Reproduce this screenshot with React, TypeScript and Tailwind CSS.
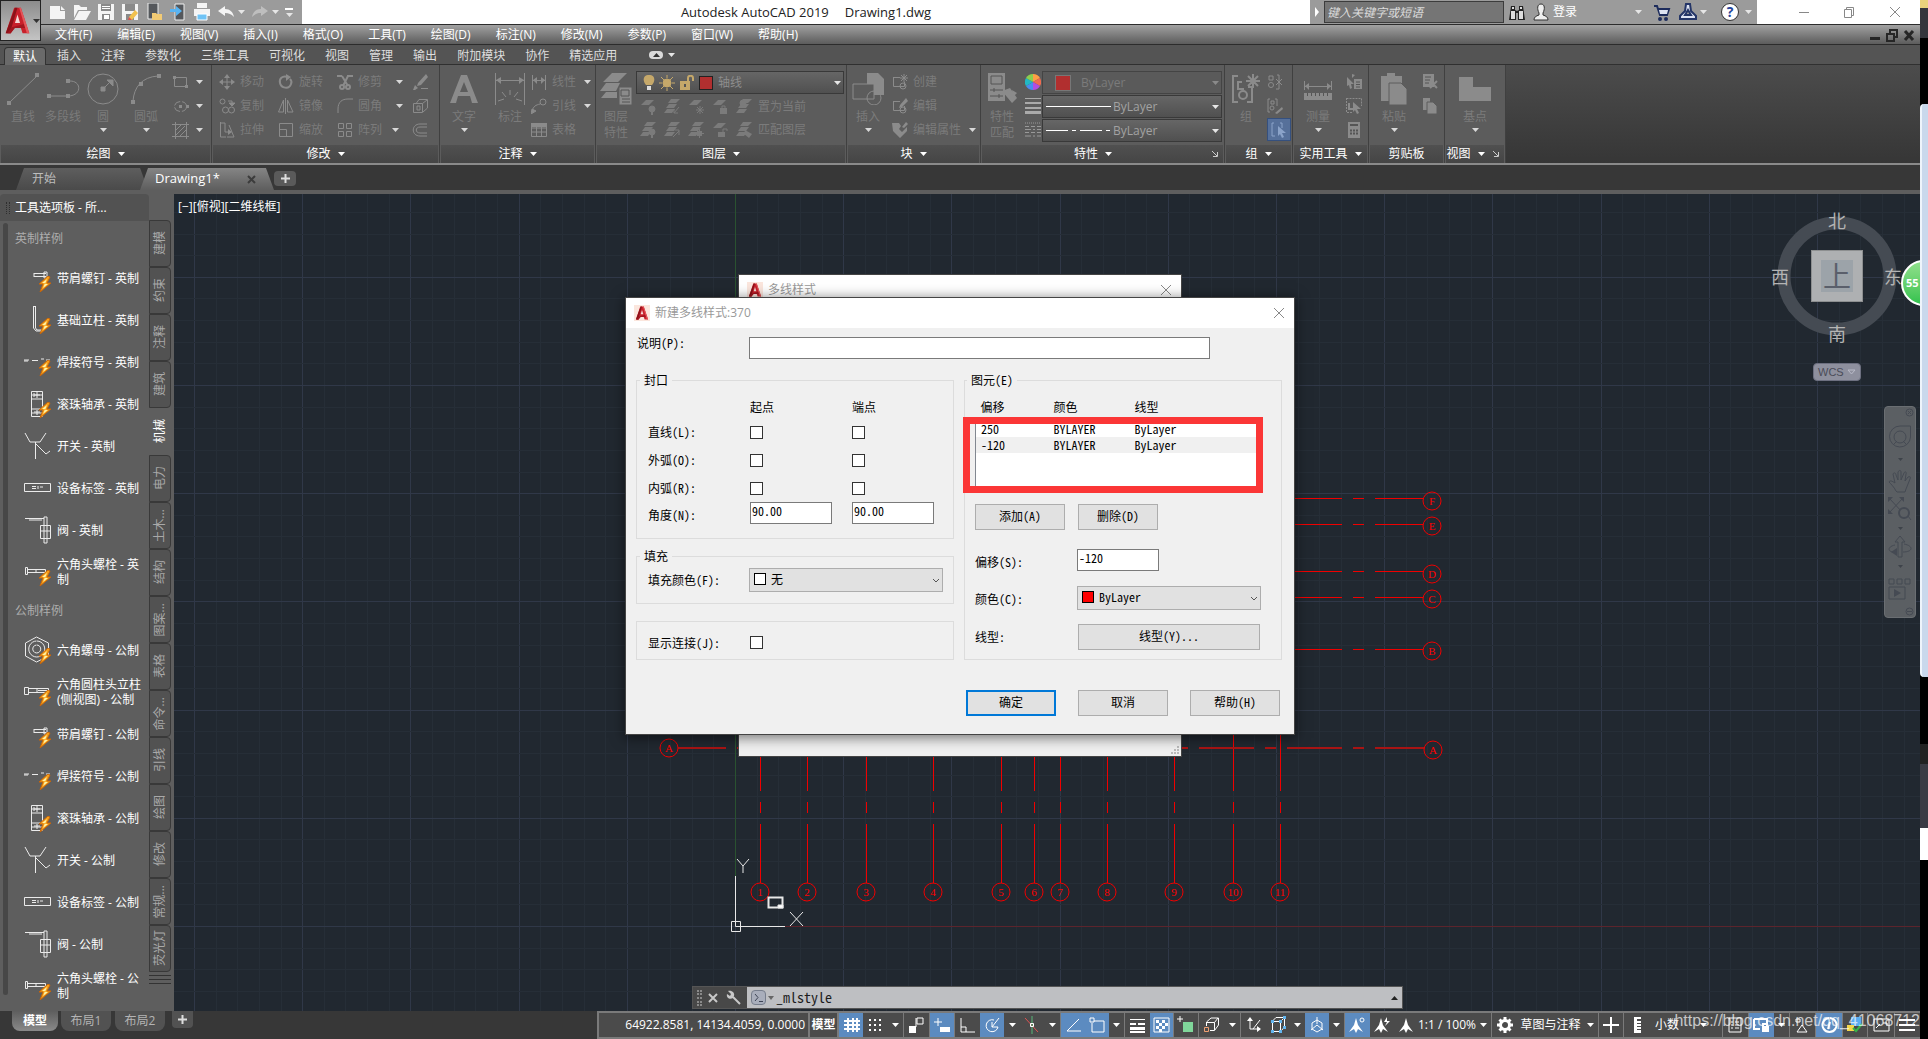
import type { ReactNode } from 'react'

const UI = "font-['Open_Sans','Noto_Sans_CJK_SC',sans-serif]"
const MONO = "font-['Noto_Sans_Mono_CJK_SC','Noto_Sans_CJK_SC',monospace]"

type IcoProps = { w?: number; h?: number; d?: string; f?: string; className?: string; sw?: number; children?: ReactNode }

// d is stroked, f is filled, both in the current text colour
function Ico({ w = 16, h = w, d, f, className = '', sw = 1, children }: IcoProps) {
  return (
    <svg width={w} height={h} viewBox={`0 0 ${w} ${h}`} className={`shrink-0 ${className}`} fill="none" stroke="currentColor" strokeWidth={sw} aria-hidden="true">
      {d && <path d={d} />}
      {f && <path d={f} fill="currentColor" stroke="none" />}
      {children}
    </svg>
  )
}

function Caret({ className = 'text-[#e6e6e6]' }: { className?: string }) {
  return <Ico w={7} h={4} f="M0 0H7L3.5 4Z" className={className} />
}

function ALogo({ size = 16 }: { size?: number }) {
  return (
    <svg width={size} height={size} viewBox="0 0 30 32" className="shrink-0" aria-hidden="true">
      <path d="M11 1H19L29 31H21L19 25H11L7 31H1Z" fill="#c8202b" />
      <path d="M12 1H15L8 24L7 31H1Z" fill="#8c1219" />
      <path d="M15 9L18 19H12Z" fill="#f3d9d6" />
      <path d="M8 24L23 20L24 25H12L7 31H3Z" fill="#a3161f" />
      <path d="M17 1H19L29 31H26Z" fill="#e4565a" />
    </svg>
  )
}

/* ---------- title bar ---------- */

function TitleBar() {
  const btn = 'flex h-6 w-6 items-center justify-center text-[#f4f4f4]'
  return (
    <header className="flex h-6 items-stretch justify-between bg-white">
      <div className="flex w-[302px] items-center bg-[#9b9b9b] pl-[46px]">
        <button aria-label="新建" className={btn}><Ico w={18} f="M1 3H11V8H16V16H1Z M12 3L16 7H12Z" /></button>
        <button aria-label="打开" className={btn}><Ico w={18} f="M1 2H6L8 4H14V7H5L1 15Z M6 8H18L13 17H1Z" /></button>
        <button aria-label="保存" className={btn}><Ico w={18} f="M1 1H17V17H1Z"><path d="M4 1H14V8H4Z M5 11H13V17H5Z" fill="#8a8a8a" stroke="none" /><path d="M7 12H12V16H7Z M5 3H13V4H5Z M5 5H13V6H5Z" fill="#fff" stroke="none" /></Ico></button>
        <button aria-label="另存为" className={btn}><Ico w={18} f="M1 1H17V17H1Z"><path d="M4 1H14V8H4Z M5 11H13V17H5Z" fill="#8a8a8a" stroke="none" /><path d="M8 14L14 7L17 10L11 17H8Z" fill="#f2c14e" stroke="none" /><path d="M8 14L11 17H7Z" fill="#d9534f" stroke="none" /></Ico></button>
        <button aria-label="从移动设备打开" className={btn}><Ico w={18}><path d="M3 0H13V16H3Z" fill="#55585c" stroke="#eee" /><path d="M7 10H11L12 11H17V17H7Z" fill="#f3cb74" stroke="none" /></Ico></button>
        <button aria-label="保存到移动设备" className={btn}><Ico w={18}><path d="M6 1H15V17H6Z" fill="#55585c" stroke="#eee" /><path d="M1 6H7V3L13 8L7 13V9H1Z" fill="#59b4f2" stroke="none" /></Ico></button>
        <button aria-label="打印" className={btn}><Ico w={18} f="M4 0H14V5H4Z M1 6H17V13H1Z"><path d="M4 11H14V17H4Z" fill="#6fc3f5" stroke="#fff" /></Ico></button>
        <button aria-label="放弃" className={btn}><Ico w={18} f="M1 8L8 3V6C13 6 16 9 17 14C14 11 12 10 8 10V13Z" /></button>
        <Caret />
        <button aria-label="重做" className={btn + ' ml-[3px] opacity-40'}><Ico w={18} f="M17 8L10 3V6C5 6 2 9 1 14C4 11 6 10 10 10V13Z" /></button>
        <Caret />
        <button aria-label="自定义快速访问工具栏" className="ml-[6px] flex flex-col items-center gap-[3px] text-white">
          <span className="h-[2px] w-2 bg-white" />
          <Caret />
        </button>
      </div>
      <h1 className="flex items-center gap-4 text-[13px] leading-6 text-[#222]">
        <span>Autodesk AutoCAD 2019</span>
        <span>Drawing1.dwg</span>
      </h1>
      <div className="flex w-[610px] items-stretch">
        <div className="flex w-[447px] items-center bg-[#9b9b9b] text-white">
          <Ico w={14} h={10} f="M5 0V10L9 5Z" />
          <input aria-label="搜索" placeholder="键入关键字或短语" className="h-[22px] w-[180px] border border-[#3c3c3c] bg-[#757575] px-[2px] text-xs italic placeholder:text-[#dcdcdc]" />
          <Ico w={24} h={20} className="ml-[1px] text-[#222]" f="M6 4H10V8L12 9L14 8V4H18L20 18H13V11H11V18H4Z"><path d="M6 9H10V17H6Z M14 9H18V17H14Z M7 5H9V7H7Z M15 5H17V7H15Z" fill="#ddd" stroke="none" /></Ico>
          <button className="flex items-center text-xs"><Ico w={24} h={20}><path d="M12 2C16 2 16 7 14 11L14 13C17 14 19 15 19 18H5C5 15 7 14 10 13V11C8 7 8 2 12 2Z" fill="#eee" stroke="#333" /></Ico>登录</button>
          <span className="ml-[58px]"><Caret /></span>
          <Ico w={20} className="ml-[10px] text-[#1d2c5c]" sw={2} d="M2 4H5L8 13H15L17 7H6"><path d="M7 8H16L15 12H8Z" fill="#dde3f2" stroke="none" /><circle cx="8" cy="17" r="1" /><circle cx="14" cy="17" r="1" /></Ico>
          <Ico w={20} className="ml-[6px]"><path d="M8 2H12L13 9L18 14V17H2V14L7 9Z" fill="#dde3f2" stroke="#243567" strokeWidth="2" /><path d="M10 8L13 13H7Z" fill="#9b9b9b" stroke="#243567" strokeWidth="2" /></Ico>
          <span className="ml-[2px]"><Caret /></span>
          <button aria-label="帮助" className="ml-[14px] flex h-[18px] w-[18px] items-center justify-center rounded-full border border-[#333] bg-white text-sm font-bold text-[#24439a]">?</button>
          <span className="ml-[6px]"><Caret /></span>
        </div>
        <div className="flex flex-1 items-center justify-between pr-[18px] pl-[40px] text-[#888]">
          <button aria-label="最小化"><Ico w={14} d="M2 7.5H12" /></button>
          <button aria-label="还原"><Ico w={14} d="M2.5 4.5H9.5V12.5H2.5Z M4.5 4V2.5H11.5V10.5H10" /></button>
          <button aria-label="关闭"><Ico w={14} d="M2 2L12 12M12 2L2 12" /></button>
        </div>
      </div>
    </header>
  )
}

const MENUS = ['文件(F)', '编辑(E)', '视图(V)', '插入(I)', '格式(O)', '工具(T)', '绘图(D)', '标注(N)', '修改(M)', '参数(P)', '窗口(W)', '帮助(H)']

function MenuBar() {
  return (
    <nav className="flex h-[21px] items-center justify-between border-y border-[#2c2c2c] bg-linear-to-b from-[#a2a2a2] to-[#5c5c5c] pr-1 pl-[55px]">
      <div className="flex gap-[25px] text-xs leading-5 text-white">
        {MENUS.map((m) => <button key={m}>{m}</button>)}
      </div>
      <div className="flex gap-[3px] text-[#262626]">
        <Ico w={14} sw={3} d="M2 10.5H12" />
        <Ico w={14} sw={2} d="M2 6H9V13H2Z M5 5V2H12V9H10" />
        <Ico w={14} sw={3} d="M3 3L11 12M11 3L3 12" />
      </div>
    </nav>
  )
}

const RIBBON_TABS = ['插入', '注释', '参数化', '三维工具', '可视化', '视图', '管理', '输出', '附加模块', '协作', '精选应用']

function RibbonTabs() {
  return (
    <div className="flex h-[20px] items-stretch border-b border-[#303030] bg-[#545454] text-xs text-[#dedede]">
      <button className="ml-1 mt-[2px] -mb-px w-[42px] rounded-t-sm border border-b-0 border-[#333] bg-[#6a6a6a] text-white">默认</button>
      <div className="ml-[11px] flex items-center gap-5 pt-[3px]">
        {RIBBON_TABS.map((t) => <button key={t}>{t}</button>)}
      </div>
      <div className="ml-8 flex items-center gap-[5px]">
        <span className="flex h-2 w-[14px] items-center justify-center rounded-sm bg-[#dadada] text-[#333]"><Ico w={7} h={4} f="M0 4H7L3.5 0Z" /></span>
        <Caret />
      </div>
    </div>
  )
}

/* ---------- ribbon ---------- */

function Panel({ title, width, arrow = true, launcher = false, children }: { title: string; width: string; arrow?: boolean; launcher?: boolean; children: ReactNode }) {
  return (
    <section className={`flex shrink-0 flex-col border-r border-[#404040] bg-[#5c5c5c] ${width}`}>
      <div className="flex h-20 items-start text-[#8b8b8b]">{children}</div>
      <div className="mx-px flex h-[18px] items-center justify-center gap-[7px] bg-linear-to-b from-[#505050] to-[#454545] text-xs text-white">
        <span className={launcher ? 'ml-auto' : ''}>{title}</span>
        {arrow && <Caret className="text-white" />}
        {launcher && <Ico w={8} className="mr-1 ml-auto text-[#ccc]" d="M1 1L6 6M6.5 2V6.5H2" />}
      </div>
    </section>
  )
}

function Big({ label, line2, arrow, width = 'w-10', children }: { label: string; line2?: string; arrow?: boolean; width?: string; children: ReactNode }) {
  return (
    <button className={`flex flex-col items-center pt-2 text-xs leading-4 text-[#7b7b7b] ${width}`}>
      <span className="mb-1 flex h-8 items-center text-[#8b8b8b]">{children}</span>
      <span className="whitespace-nowrap">{label}</span>
      {line2 && <span>{line2}</span>}
      {arrow && <span className="flex h-[10px] items-center"><Caret className="text-[#d8d8d8]" /></span>}
    </button>
  )
}

function Small({ label, arrow, gap = 'gap-[14px]', children }: { label?: string; arrow?: boolean; gap?: string; children: ReactNode }) {
  return (
    <button className={`flex h-6 items-center text-xs text-[#7b7b7b] ${gap}`}>
      <span className="flex items-center gap-[5px] whitespace-nowrap"><span className="text-[#8b8b8b]">{children}</span>{label}</span>
      {arrow && <Caret className="text-[#d8d8d8]" />}
    </button>
  )
}

function Col({ className = '', children }: { className?: string; children: ReactNode }) {
  return <div className={`flex flex-col items-start pt-[5px] ${className}`}>{children}</div>
}

const LAYER_A = 'M6 1H14L9 6H1Z'
const STACK = 'M7 0H16L12 4H4Z M5 5H13L10 9H2Z M3 10H11L8 14H0Z'

function Ribbon() {
  return (
    <div className="flex h-[100px] items-stretch border-b-2 border-[#8a8a8a] bg-linear-to-b from-[#4c4c4c] to-[#363636]">
      <Panel title="绘图" width="w-[212px]">
        <div className="w-[3px]" />
        <Big label="直线"><Ico w={34} h={32} d="M4 29L31 3" f="M1 28h4v4h-4z M29 0h4v4h-4z" /></Big>
        <Big label="多段线"><Ico w={34} h={32} d="M3 23H22C36 23 36 8 24 8" f="M1 21h4v4h-4z M20 21h4v4h-4z M20 6h4v4h-4z" /></Big>
        <Big label="圆" arrow><Ico w={32} d="M17 15L24 8"><circle cx="16" cy="16" r="15" /><path d="M14 14h4v4h-4z M20 7H26V13Z" fill="currentColor" /></Ico></Big>
        <Big label="圆弧" arrow width="w-[46px]"><Ico w={32} d="M3 28C4 14 12 4 28 3" f="M1 27h4v4h-4z M9 9h4v4h-4z M27 1h4v4h-4z" /></Big>
        <Col className="pl-[3px]">
          <Small arrow gap="gap-[7px]"><Ico w={17} d="M2.5 3.5H14.5V12.5H2.5Z" f="M1 2h3v3h-3z M13 11h3v3h-3z" /></Small>
          <Small arrow gap="gap-[7px]"><Ico w={17}><ellipse cx="8.5" cy="8.5" rx="6" ry="5" strokeDasharray="7 2" /><path d="M7 7h3v3h-3z M14 7h3v3h-3z" fill="currentColor" stroke="none" /></Ico></Small>
          <Small arrow gap="gap-[7px]"><Ico w={17} d="M3.5 0V17 M14.5 0V17 M0 2.5H17 M0 14.5H17 M4 8L9 3 M4 13L13 4 M8 14L14 8" /></Small>
        </Col>
      </Panel>

      <Panel title="修改" width="w-[228px]">
        <Col className="w-[59px] pl-[7px]">
          <Small label="移动"><Ico d="M8 2V14M2 8H14" f="M8 0L11 4H5Z M8 16L11 12H5Z M0 8L4 5V11Z M16 8L12 5V11Z" /></Small>
          <Small label="复制"><Ico d="M9 3H13V6"><circle cx="3.5" cy="3.5" r="2.5" /><circle cx="6.5" cy="12" r="3" /><circle cx="12.5" cy="12" r="3" /><path d="M10 5H16L13 8Z" fill="currentColor" /></Ico></Small>
          <Small label="拉伸"><Ico d="M1.5 0V15H7M1.5 1H6V10H12M10 3L15 15H8" f="M9 7L13 10L9 13Z" /></Small>
        </Col>
        <Col className="w-[59px] pl-[7px]">
          <Small label="旋转"><Ico sw={2} d="M10 3C4 1 1 5 2 9C3 14 11 16 13 10C14 8 13 6 12 5" f="M8 0L13 3L8 7Z" /></Small>
          <Small label="镜像"><Ico d="M7.5 0V16M5.5 2V14H0.5ZM9.5 2V14H15Z" /></Small>
          <Small label="缩放"><Ico d="M1.5 1.5H14.5V14.5H1.5ZM1.5 7.5H8.5V14" /></Small>
        </Col>
        <Col className="w-[76px] pl-[7px]">
          <Small label="修剪" arrow><Ico sw={2} d="M0 2H5M10 2H16M5 2L11 12M11 2L6 12"><circle cx="5" cy="13" r="2" /><circle cx="11" cy="13" r="2" /></Ico></Small>
          <Small label="圆角" arrow><Ico d="M1 15V11C1 4 5 1 11 1H16" /></Small>
          <Small label="阵列" arrow gap="gap-[10px]"><Ico d="M1.5 1.5H6.5V6.5H1.5ZM9.5 1.5H14.5V6.5H9.5ZM1.5 9.5H6.5V14.5H1.5ZM9.5 9.5H14.5V14.5H9.5Z" /></Small>
        </Col>
        <Col className="pl-[6px]">
          <Small><Ico f="M14 0L16 3L9 11L5 12L6 9Z M3 11L6 14L3 16H1Z M9 14H16V15H9Z" /></Small>
          <Small><Ico d="M1.5 5.5H10.5V14.5H1.5ZM4.5 5L7 1.5H15.5V10L11 14M10.5 5.5L15 2M5 8H8V12H5Z" /></Small>
          <Small><Ico d="M15 2H8C-1 2 -1 14 8 14H15M15 5H8C3 5 3 11 8 11H15" /></Small>
        </Col>
      </Panel>

      <Panel title="注释" width="w-[156px]">
        <Big label="文字" arrow width="w-[48px]"><Ico w={28} h={30} f="M11 1H17L28 29H22L20 22H8L6 29H0Z"><path d="M14 8L18 18H10Z" fill="#5c5c5c" stroke="none" /></Ico></Big>
        <Big label="标注" width="w-[36px] ml-[4px]"><Ico w={32} d="M1.5 0V32M30.5 0V32M2 7.5H30M16 17V22M8 19L12 24M24 19L20 24M4 28L10 26M28 28L22 26" f="M2 7L7 4V11Z M30 7L25 4V11Z" /></Big>
        <Col className="pl-[3px]">
          <Small label="线性" arrow gap="gap-2"><Ico d="M1.5 1V16M14.5 1V16M2 6.5H14" f="M2 6L6 3V10Z M14 6L10 3V10Z" /></Small>
          <Small label="引线" arrow gap="gap-2"><Ico d="M1 14C2 8 5 7 9 6"><circle cx="12" cy="4" r="3" /><path d="M0 16L1 11L5 13Z" fill="currentColor" /></Ico></Small>
          <Small label="表格"><Ico d="M0.5 1.5H15.5V14.5H0.5ZM0 6H16M0 10H16M5.5 5V15M10.5 5V15" f="M0 1H16V5H0Z" /></Small>
        </Col>
      </Panel>

      <Panel title="图层" width="w-[251px]">
        <Big label="图层" line2="特性"><Ico w={32} f="M12 0H27L18 9H3Z M6 10H20L16 18H0Z M6 19H17V25H1Z"><path d="M19 14H32V32H19Z" fill="#8b8b8b" stroke="#5c5c5c" /><path d="M21 17H29V23H21ZM22 26H30M22 29H30" stroke="#555" /></Ico></Big>
        <div className="pt-[6px]">
          <button className="flex h-[23px] w-[208px] items-center border border-[#393939] bg-linear-to-b from-[#666] to-[#505050] pr-[2px] pl-[6px] text-xs text-[#8d8d8d]">
            <Ico w={12} h={16} className="text-[#c5a86a]" f="M6 0C13 0 12 7 9 10H3C0 7 -1 0 6 0Z"><path d="M4 11H8V15H4Z" fill="#ddd" stroke="none" /></Ico>
            <Ico w={16} className="ml-[4px] text-[#c5a86a]" d="M8 0V3M8 13V16M0 8H3M13 8H16M2 2L5 5M14 2L11 5M2 14L5 11M14 14L11 11"><circle cx="8" cy="8" r="4" fill="currentColor" /></Ico>
            <Ico w={16} className="ml-[4px] text-[#c5a86a]" sw={2} f="M1 6H11V15H1Z" d="M9 6V3C9 0 14 0 14 3V6"><path d="M5 9H7V12H5Z" fill="#555" stroke="none" /></Ico>
            <span className="ml-[4px] h-[14px] w-[14px] border border-[#222] bg-[#b12f2f]" />
            <span className="ml-[5px]">轴线</span>
            <span className="ml-auto"><Caret /></span>
          </button>
          <div className="flex h-6 items-center gap-2 pt-[1px] pl-[4px] text-xs text-[#7b7b7b]">
            <Ico f={LAYER_A}><circle cx="12" cy="10" r="3" fill="currentColor" /><path d="M12 12V16" strokeWidth="2" /></Ico>
            <Ico f={STACK} d="M15 8L10 14M10 10V14H14" />
            <Ico f={LAYER_A} d="M12 7V15M8 11H16M9 8L15 14M15 8L9 14" />
            <Ico f={LAYER_A + ' M8 9H15V15H8Z'} d="M10 9V7H13V9" />
            <Ico f={STACK}><circle cx="7" cy="4" r="3" fill="currentColor" /></Ico>
            <span className="-ml-[2px]">置为当前</span>
          </div>
          <div className="flex h-6 items-center gap-2 pl-[4px] text-xs text-[#7b7b7b]">
            <Ico f={STACK}><circle cx="12" cy="10" r="3" fill="currentColor" /><path d="M12 12V16" strokeWidth="2" /></Ico>
            <Ico f={STACK} d="M9 15L15 9M11 8H15V13" />
            <Ico f={STACK + ' M9 9h5v5h-5z'} d="M11.5 7V16M7 11.5H16" />
            <Ico f={LAYER_A + ' M6 10H13V15H6Z'} d="M11 10V7H15V9" />
            <Ico f={STACK + ' M9 8L16 12L13 16L8 12Z'} />
            <span className="-ml-[2px]">匹配图层</span>
          </div>
        </div>
      </Panel>

      <Panel title="块" width="w-[134px]">
        <Big label="插入" arrow width="w-[42px]"><Ico w={32} f="M15 0H26L32 6V22H15Z"><path d="M1 11H22V26H1Z" fill="#5c5c5c" /><circle cx="22" cy="25" r="7" /></Ico></Big>
        <Col className="pl-[3px]">
          <Small label="创建"><Ico d="M1.5 3.5H8M1.5 3V12.5H12.5V8"><circle cx="11" cy="12" r="3" /><path d="M12 0V8M8 4H16M9 1L15 7M15 1L9 7" /></Ico></Small>
          <Small label="编辑"><Ico d="M1.5 3.5H8M1.5 3V12.5H12.5V8" f="M14 0L16 3L10 9L7 10L8 7Z"><circle cx="11" cy="12" r="3" /></Ico></Small>
          <Small label="编辑属性" arrow gap="gap-2"><Ico f="M0 1H7L9 4L7 7L10 10L15 5V9L8 16L1 9Z M14 0L16 2L12 6L10 5Z" /></Small>
        </Col>
      </Panel>

      <Panel title="特性" width="w-[244px]" launcher>
        <Big label="特性" line2="匹配" width="w-[42px]"><Ico w={32} f="M2 0H19V28H2Z M16 18L24 15L31 25L26 30Z M26 17L31 20L28 23Z"><path d="M5 3H16V11H5ZM4 17H17M4 23H17M8 15V19M13 21V25" stroke="#555" /></Ico></Big>
        <div className="flex w-[19px] flex-col items-center pt-[5px]">
          <svg width="16" height="24" viewBox="0 0 16 24" aria-hidden="true">
            <path d="M8 12V4A8 8 0 0 1 15 8Z" fill="#ff9f45" />
            <path d="M8 12L15 8A8 8 0 0 1 15 16Z" fill="#f26b4f" />
            <path d="M8 12L15 16A8 8 0 0 1 8 20Z" fill="#b24de0" />
            <path d="M8 12V20A8 8 0 0 1 1 16Z" fill="#4a8cf0" />
            <path d="M8 12L1 16A8 8 0 0 1 1 8Z" fill="#22b8c4" />
            <path d="M8 12L1 8A8 8 0 0 1 8 4Z" fill="#8bcf4f" />
          </svg>
          <span className="flex h-6 items-center"><Ico f="M0 0H16V1H0Z M0 4H16V6H0Z M0 9H16V11H0Z M0 13H16V16H0Z" className="text-[#aaa]" /></span>
          <span className="flex h-6 items-center"><Ico className="text-[#999]"><path d="M0 1H16" strokeDasharray="1 1" /><path d="M0 4.5H16M0 10.5H16" strokeDasharray="4 2" /><path d="M0 7.5H16M0 14H16" strokeDasharray="6 2 2 2" /></Ico></span>
        </div>
        <div className="flex w-[180px] flex-col gap-px pt-[6px] text-xs text-[#a2a2a2]">
          <button className="flex h-[23px] items-center border border-[#444] bg-[#5a5a5a] pr-[2px] pl-3 text-[#7b7b7b]">
            <span className="h-4 w-4 border border-[#777] bg-[#b12f2f]" /><span className="ml-[10px]">ByLayer</span>
            <span className="ml-auto"><Caret className="text-[#8a8a8a]" /></span>
          </button>
          <button className="flex h-[23px] items-center border border-[#393939] bg-linear-to-b from-[#666] to-[#505050] pr-[2px] pl-[3px]">
            <span className="mr-[2px] h-px w-[65px] bg-white" />ByLayer
            <span className="ml-auto"><Caret /></span>
          </button>
          <button className="flex h-[23px] items-center border border-[#393939] bg-linear-to-b from-[#666] to-[#505050] pr-[2px] pl-[3px]">
            <Ico w={65} h={3} className="mr-[2px] text-white"><path d="M0 1.5H65" strokeDasharray="22 4 4 4" /></Ico>ByLayer
            <span className="ml-auto"><Caret /></span>
          </button>
        </div>
      </Panel>

      <Panel title="组" width="w-[68px]">
        <Big label="组" width="w-[42px]"><Ico w={32} sw={2} d="M8 3H3V29H8M18 14H22V29H17M7 9H12M8 8V16H14M23 1V15M16 8H30M18 3L28 13M28 3L18 13"><circle cx="13" cy="22" r="4" /></Ico></Big>
        <Col className="items-center">
          <Small><Ico d="M2 2H6V6H2ZM10 1H12V15H9M9 5L15 11M15 5L9 11"><circle cx="4" cy="11" r="2.5" /></Ico></Small>
          <Small><Ico d="M3 1H1V14H3M8 1H10V8M4 3H7V6H4Z" f="M15 9L16 11L10 16L8 15Z"><circle cx="5" cy="10" r="2" /></Ico></Small>
          <button aria-label="组选择" className="flex h-[23px] w-6 items-center justify-center border border-[#35507e] bg-[#56709a]"><Ico className="text-[#8ba3c9]" d="M3 1H1V14H4M9 1H11V6" f="M7 4L15 11H11L13 15L11 16L9 12L7 14Z" /></button>
        </Col>
      </Panel>

      <Panel title="实用工具" width="w-[76px]">
        <Big label="测量" arrow width="w-[50px]"><Ico w={28} h={28} d="M0.5 6V15M27.5 6V15M1 11.5H27" f="M0 18H28V25H0Z M1 11L5 8V15Z M27 11L23 8V15Z"><path d="M3.5 18V21M7.5 18V21M11.5 18V21M15.5 18V21M19.5 18V21M23.5 18V21" stroke="#555" /></Ico></Big>
        <Col className="pl-[3px]">
          <Small><Ico f="M1 3L8 10H5L6 14L4 15L3 11L1 12Z M8 5H16V15H8Z M6 0L9 1L6 4Z"><path d="M10 8H14M10 10.5H14M10 13H14" stroke="#555" /></Ico></Small>
          <Small><Ico f="M7 4L15 11H11L13 15L11 16L9 12L7 14Z"><path d="M0.5 0.5H15.5V8M0.5 0V14.5H7" strokeDasharray="2 1" /><path d="M3 5V11H7" strokeWidth="2" /></Ico></Small>
          <Small><Ico f="M2 0H14V16H2Z"><path d="M4 3H12M4 8.5H6M7 8.5H9M10 8.5H12M4 11.5H6M7 11.5H9M10 11.5H12" strokeWidth="2" stroke="#555" /></Ico></Small>
        </Col>
      </Panel>

      <Panel title="剪贴板" width="w-[76px]" arrow={false}>
        <Big label="粘贴" arrow width="w-[50px]"><Ico w={28} h={32} f="M1 3H7V0H15V3H22V28H1Z"><path d="M9 10H21L27 16V32H9Z" fill="#8b8b8b" stroke="#5c5c5c" /></Ico></Big>
        <Col className="pl-[3px]">
          <Small><Ico f="M1 0H12V13H1Z"><path d="M3 3H9M3 6H8M3 9H7" stroke="#555" /><path d="M8 7L15 14M15 7L8 14" strokeWidth="2" /></Ico></Small>
          <Small><Ico f="M1 0H8V12H1Z"><path d="M5 4H11L15 8V16H5Z" fill="#8b8b8b" stroke="#5c5c5c" /></Ico></Small>
        </Col>
      </Panel>

      <Panel title="视图" width="w-[61px]" launcher>
        <Big label="基点" arrow width="w-[60px]"><Ico w={32} h={28} f="M0 2H14V12H32V26H0Z" /></Big>
      </Panel>
    </div>
  )
}

function FileTabs() {
  return (
    <div className="flex h-[29px] items-end border-b-4 border-[#5e5e5e] bg-[#373737] pl-4 text-xs">
      <button className="h-[22px] w-[132px] rounded-t-lg bg-linear-to-b from-[#5e5e5e] to-[#4a4a4a] pl-4 text-left text-[#bdbdbd] [clip-path:polygon(8px_0,94%_0,100%_100%,0_100%)]">开始</button>
      <div className="-ml-2 flex h-[22px] w-[134px] items-center justify-between bg-linear-to-b from-[#858585] to-[#5e5e5e] pr-[18px] pl-[15px] text-[13px] text-white [clip-path:polygon(8px_0,94%_0,100%_100%,0_100%)]">
        <button>Drawing1*</button>
        <button aria-label="关闭 Drawing1"><Ico w={9} sw={2} className="text-[#3c3c3c]" d="M1 1L8 8M8 1L1 8" /></button>
      </div>
      <button aria-label="新图形" className="mb-1 flex h-[15px] w-[22px] items-center justify-center rounded-sm bg-[#5a5a5a] text-[#ddd]"><Ico w={9} sw={2} d="M4.5 0V9M0 4.5H9" /></button>
    </div>
  )
}

/* ---------- tool palette ---------- */

type Shape = 'screw' | 'stud' | 'weld' | 'bearing' | 'switch' | 'tag' | 'valve' | 'bolt' | 'nut' | 'cap'

const SHAPES: Record<Shape, string> = {
  screw: 'M10 9.5H22M10 12.5H22M10 9V13M20 8H23V14H20Z',
  stud: 'M9 0.5H12M9.5 1V22L12 25H18M11.5 1V22L13 24H18',
  weld: 'M0 12H5M8 12.5H14M17 11H20M22 12H26M0 13H4',
  bearing: 'M7.5 1.5H18.5V26.5H7.5ZM7 5H19M7 9H19M7 19H19M7 23H19M10 3V7M13 2V8M16 5H10M13 20V25M10 22H16',
  switch: 'M1 1L6 10H16L22 1M11.5 10V27M12 12L22 22L26 19',
  tag: 'M0.5 9.5H26.5V17.5H0.5ZM8 12.5H12M8 14.5H12M14 12V15M16 13H19',
  valve: 'M1 2.5H20M5 4H18M20 1H23V27H20ZM16.5 9.5H26.5V22.5H16.5ZM16 15H26',
  bolt: 'M1.5 9.5H3.5V16.5H1.5ZM4 11.5H21.5V14.5H4M12 11V15',
  nut: 'M12.5 1L24.5 7V20L12.5 26L1.5 20V7ZM12.5 5A8 8 0 1 0 13 5M12.5 9A4 4 0 1 0 13 9',
  cap: 'M0.5 9.5H4.5V16.5H0.5ZM4 10.5H24.5V14.5H4M14 12.5H24M13 11V15',
}

function Bolt() {
  return (
    <svg width="14" height="16" viewBox="0 0 14 16" className="absolute top-[12px] left-[14px]" aria-hidden="true">
      <path d="M10 0L1 8H5L2 16L13 7H9L12 1Z" fill="#f7a21b" stroke="#c9660a" />
      <path d="M9 3L4 7H7L5 12L10 8H7Z" fill="#fff3a8" />
    </svg>
  )
}

type Item = [Shape, string, boolean]

const IMPERIAL: Item[] = [
  ['screw', '带肩螺钉 - 英制', true],
  ['stud', '基础立柱 - 英制', true],
  ['weld', '焊接符号 - 英制', true],
  ['bearing', '滚珠轴承 - 英制', true],
  ['switch', '开关 - 英制', false],
  ['tag', '设备标签 - 英制', false],
  ['valve', '阀 - 英制', false],
  ['bolt', '六角头螺栓 - 英制', true],
]

const METRIC: Item[] = [
  ['nut', '六角螺母 - 公制', true],
  ['cap', '六角圆柱头立柱 (侧视图) - 公制', true],
  ['screw', '带肩螺钉 - 公制', true],
  ['weld', '焊接符号 - 公制', true],
  ['bearing', '滚珠轴承 - 公制', true],
  ['switch', '开关 - 公制', false],
  ['tag', '设备标签 - 公制', false],
  ['valve', '阀 - 公制', false],
  ['bolt', '六角头螺栓 - 公制', true],
]

function PaletteGroup({ title, items }: { title: string; items: Item[] }) {
  return (
    <>
      <h2 className="flex h-9 items-center pl-[7px] text-xs text-[#adadad]">{title}</h2>
      <ul>
        {items.map(([shape, label, dynamic]) => (
          <li key={label}>
            <button className="flex h-[42px] w-full items-center pl-4 text-left text-xs leading-[15px] text-white">
              <span className="relative mr-[5px] block text-[#ebebeb]">
                <Ico w={28} d={SHAPES[shape]} />
                {dynamic && <Bolt />}
              </span>
              <span className="w-[88px]">{label}</span>
            </button>
          </li>
        ))}
      </ul>
    </>
  )
}

const PALETTE_TABS = ['建模', '约束', '注释', '建筑', '机械', '电力', '土木...', '结构', '图案...', '表格', '命令...', '引线', '绘图', '修改', '常规...', '荧光灯']

function Palette() {
  return (
    <aside className="flex w-[174px] shrink-0 overflow-hidden bg-[#5e5e5e]">
      <div className="w-[149px]">
        <div className="flex h-[27px] items-center gap-[5px] rounded-t bg-[#525252] pl-[6px] text-xs text-white">
          <span className="h-3 w-1 border-x border-dotted border-[#2e2e2e]" />
          工具选项板 - 所...
        </div>
        <div className="flex pl-[3px]">
          <div className="mt-[2px] mb-3 w-[5px] rounded bg-[#474747]" />
          <div className="flex-1">
            <PaletteGroup title="英制样例" items={IMPERIAL} />
            <PaletteGroup title="公制样例" items={METRIC} />
          </div>
        </div>
      </div>
      <div className="w-[22px] pt-[26px]">
        {PALETTE_TABS.map((t) => (
          <button
            key={t}
            className={`flex h-[47px] w-[22px] items-center justify-center rounded-r-sm border text-xs ${t === '机械' ? 'border-transparent text-white' : 'border-[#393939] bg-[#525252] text-[#a9a9a9]'}`}
          >
            <span className="rotate-180 [text-orientation:sideways] [writing-mode:vertical-rl]">{t}</span>
          </button>
        ))}
        <div className="h-1 border-b border-[#333]" />
        <div className="h-1 border-b border-[#333]" />
        <div className="h-1 border-b border-[#333]" />
      </div>
    </aside>
  )
}

/* ---------- drawing area ---------- */

const STEP = 21.64
const ORIGIN = { x: 561, y: 732 }
const COLUMNS = [586, 633, 692, 759, 827, 860, 886, 933, 1000, 1059, 1106]
const ROWS: [string, number, number][] = [
  ['F', 304, 307],
  ['E', 330, 332],
  ['D', 377, 380],
  ['C', 403, 405],
  ['B', 455, 457],
]

function Bubble({ x, y, label }: { x: number; y: number; label: string }) {
  return (
    <g>
      <circle cx={x} cy={y} r="9" fill="none" stroke="#f00000" />
      <text x={x} y={y + 4} textAnchor="middle" fill="#ff0000" fontSize="11" fontFamily="Liberation Serif, serif">{label}</text>
    </g>
  )
}

function Drawing() {
  const xs = Array.from({ length: 86 }, (_, i) => i - 26)
  const ys = Array.from({ length: 40 }, (_, i) => i - 33)
  const gridColor = (i: number) => (i % 5 === 0 ? '#303848' : '#262e37')
  // major lines last, so they stay on top
  const order = (a: number, b: number) => Number(a % 5 === 0) - Number(b % 5 === 0)
  return (
    <svg className="absolute inset-0 h-full w-full" aria-label="Drawing1">
      <g shapeRendering="crispEdges">
        {xs.sort(order).map((i) => {
          const x = Math.round(ORIGIN.x + i * STEP) + 0.5
          return <line key={i} x1={x} x2={x} y1="0" y2="100%" stroke={gridColor(i)} />
        })}
        {ys.sort(order).map((j) => {
          const y = Math.round(ORIGIN.y + j * STEP) + 0.5
          return <line key={j} x1="0" x2="100%" y1={y} y2={y} stroke={gridColor(j)} />
        })}
        <line x1="561.5" x2="561.5" y1="0" y2="682" stroke="#2a5230" />
        <line x1="611" x2="100%" y1="732.5" y2="732.5" stroke="#5c242c" />
        {COLUMNS.map((x, i) => (
          <path key={x} d={`M${x + 0.5} ${i > 8 ? 540 : 555}V597M${x + 0.5} 608V619M${x + 0.5} 630V689`} stroke="#f00000" />
        ))}
        {ROWS.map(([l, y]) => (
          <path key={l} d={`M1110 ${y + 0.5}H1168M1179 ${y + 0.5}H1190M1201 ${y + 0.5}H1249`} stroke="#f00000" />
        ))}
        <path d="M504 554H552M563 554H574M1007 554H1014M1025 554H1080M1091 554H1102M1113 554H1168M1179 554H1190M1201 554H1250" stroke="#a81414" strokeWidth="2" />
      </g>
      {COLUMNS.map((x, i) => <Bubble key={x} x={x} y={698} label={String(i + 1)} />)}
      {ROWS.map(([l, , y]) => <Bubble key={l} x={1258} y={y} label={l} />)}
      <Bubble x={495} y={554} label="A" />
      <Bubble x={1259} y={556} label="A" />
      <g fill="none" stroke="#e8e8e8">
        <path d="M561.5 682V732.5H611" />
        <path d="M557.5 727.5H566.5V737.5H557.5Z" />
        <path d="M563 665L569 672L575 665M569 672V679" />
        <path d="M616 718L629 732M629 718L616 732" />
        <path d="M594.5 703.5H608.5V713.5H594.5Z" strokeWidth="2" />
        <path d="M604 711H609V714H604Z" fill="#fff" />
      </g>
    </svg>
  )
}

function ViewCube() {
  const dir = "absolute text-[18px] leading-5 text-[#b4b4b4] font-['Noto_Sans_CJK_SC',sans-serif]"
  return (
    <div className="absolute top-[14px] right-[15px] h-[176px] w-[134px]">
      <svg width="134" height="136" viewBox="0 0 134 136" className="absolute top-0 left-0" aria-hidden="true">
        <circle cx="66" cy="68" r="53" fill="none" stroke="#454b53" strokeWidth="13" />
      </svg>
      <button className={dir + ' top-[2px] left-[57px]'}>北</button>
      <button className={dir + ' top-[58px] left-0'}>西</button>
      <button className={dir + ' top-[58px] left-[113px]'}>东</button>
      <button className={dir + ' top-[115px] left-[57px]'}>南</button>
      <button className="absolute top-[42px] left-[40px] flex h-[52px] w-[52px] items-center justify-center border border-[#8d8f90] bg-[#aeb0b2]">
        <span className="flex h-8 w-8 items-center justify-center bg-[#9ca3a9] text-[28px] leading-8 text-[#5a5f6b]">上</span>
      </button>
      <button className="absolute top-[155px] left-[42px] flex h-[18px] w-[48px] items-center justify-between rounded border border-[#6d7080] bg-[#8e909e] px-1 font-['Liberation_Sans',sans-serif] text-[11px] text-[#4a4c58]">
        WCS <Ico w={9} h={6} className="text-[#b9bbc8]" d="M1 1H8L4.5 5Z" />
      </button>
    </div>
  )
}

function NavBar() {
  return (
    <div className="absolute top-[212px] right-1 flex h-[212px] w-8 flex-col items-center rounded border border-[#6a6e72] bg-[#5b5f63] text-[#454a53]">
      <button aria-label="关闭" className="mt-px mr-px self-end"><Ico w={9} d="M3 3L6 6M6 3L3 6"><circle cx="4.5" cy="4.5" r="3.5" /></Ico></button>
      <button aria-label="全导航控制盘" className="mt-[8px]"><Ico w={24} d="M12 1H22.5V12A10.5 10.5 0 1 1 12 1M6 19L9 16M18 19L15 16"><circle cx="12" cy="12" r="6" /></Ico></button>
      <span className="mt-[2px] flex h-4 items-center"><Ico w={5} h={3} className="text-[#3e434a]" f="M0 0H5L2.5 3Z" /></span>
      <button aria-label="平移" className="mt-[2px]"><Ico w={24} d="M8 22C6 18 3 15 1 13C2 11 4 12 7 14L5 5C6 3 8 4 8 6L10 11V3C11 1 13 1 13 3V11L16 4C17 2 19 3 18 5L17 12L20 8C22 7 23 8 22 10L18 20L17 23H9Z" /></button>
      <button aria-label="范围缩放" className="mt-[4px]"><Ico w={24} d="M1 1L15 16M15 1L1 16M20 19L23 23" f="M0 0H5L0 5Z M16 0V5L11 0Z M0 17V12L5 17Z"><circle cx="16" cy="16" r="5" fill="#5b5f63" strokeWidth="2" /></Ico></button>
      <span className="flex h-[14px] items-center"><Ico w={5} h={3} className="text-[#3e434a]" f="M0 0H5L2.5 3Z" /></span>
      <button aria-label="动态观察"><Ico w={24} d="M10 7V22H14V7H17L12 1L7 7ZM7 10C-2 12 0 18 8 17M16 9C26 11 25 17 15 17" f="M3 17L9 13V21Z" /></button>
      <span className="flex h-[14px] items-center"><Ico w={5} h={3} className="text-[#3e434a]" f="M0 0H5L2.5 3Z" /></span>
      <button aria-label="ShowMotion" className="mt-[4px]"><Ico w={24} d="M1 2H6V7H1ZM9 2H14V7H9ZM17 2H22V7H17ZM1 10H17V22H1Z" f="M6 12L13 16L6 20Z" /></button>
      <button aria-label="自定义" className="mt-auto mr-px mb-px self-end"><Ico w={9} d="M2 4.5H7"><circle cx="4.5" cy="4.5" r="3.5" /></Ico></button>
    </div>
  )
}

function CommandLine() {
  return (
    <div className="absolute bottom-[2px] left-[518px] flex h-[23px] w-[711px] items-stretch border border-[#555] bg-[#bebfc2]">
      <div className="flex w-[54px] items-center gap-[6px] bg-[#484848] pl-1 text-[#c8c8c8]">
        <span className="h-4 w-[5px] border-x-2 border-dotted border-[#8a8a8a]" />
        <Ico w={10} sw={2} d="M1 1L9 9M9 1L1 9" />
        <Ico w={16} className="ml-[2px]" sw={2} d="M7 7L14 14" f="M2 1L5 4L4 6L1 4C0 8 4 10 7 8L8 6C9 3 6 0 2 1Z" />
      </div>
      <label className="flex flex-1 items-center pl-1">
        <span className="flex h-[15px] w-[15px] items-center justify-center rounded-sm border border-[#777e8c] bg-[#a9aebb] text-[#3d4454]"><Ico w={11} d="M2 2L5 5.5L2 9M6 9.5H10" /></span>
        <span className="mx-[2px] text-[#666]"><Ico w={6} h={4} f="M0 0H6L3 4Z" /></span>
        <input aria-label="命令" defaultValue="_mlstyle" className={`h-5 flex-1 bg-transparent pb-[2px] text-sm text-[#1c1c1c] outline-none ${MONO}`} />
      </label>
      <button aria-label="历史记录" className="mr-[2px] w-3 text-[#222]"><Ico w={7} h={4} f="M0 4H7L3.5 0Z" className="mx-auto" /></button>
    </div>
  )
}

/* ---------- dialogs ---------- */

const DLG_BTN = 'h-[26px] border border-[#adadad] bg-[#e1e1e1] pb-[2px] leading-none'
const DLG_INPUT = 'border border-[#7a7a7a] bg-white px-[1px] pb-[5px] leading-none'

function DialogTitle({ children }: { children: ReactNode }) {
  return (
    <div className={`flex h-[30px] items-center justify-between bg-white pr-2 pl-2 text-xs text-[#999] ${UI}`}>
      <span className="flex items-center gap-[5px]">
        <span className="flex h-4 w-4 items-center justify-center bg-[#fbe6dd]"><ALogo size={14} /></span>
        {children}
      </span>
      <button aria-label="关闭"><Ico w={14} className="text-[#888]" d="M2 2L12 12M12 2L2 12" /></button>
    </div>
  )
}

function Check({ label }: { label: string }) {
  return <input type="checkbox" aria-label={label} className="h-[13px] w-[13px] appearance-none border border-[#333] bg-white" />
}

function ColorSelect({ id, swatch, value, width }: { id: string; swatch: string; value: string; width: string }) {
  return (
    <span className={`relative block h-6 ${width}`}>
      <select id={id} className="h-6 w-full appearance-none rounded-none border border-[#adadad] bg-[#e1e1e1] pb-[3px] pl-[21px]">
        <option>{value}</option>
      </select>
      <span className={`pointer-events-none absolute top-[5px] left-[5px] h-3 w-3 border border-black ${swatch}`} />
      <Ico w={8} h={6} className="pointer-events-none absolute top-[10px] right-[3px] text-[#555]" d="M1 1L4 4L7 1" />
    </span>
  )
}

const CAPS = ['直线(L):', '外弧(O):', '内弧(R):']

function NewStyleDialog() {
  return (
    <div role="dialog" aria-label="新建多线样式:370" className={`absolute top-[104px] left-[452px] w-[668px] bg-[#f0f0f0] text-xs text-black shadow-[0_0_0_1px_#444,0_2px_12px_2px_rgba(0,0,0,0.5)] ${MONO}`}>
      <DialogTitle>新建多线样式:370</DialogTitle>
      <div className="px-[10px] pb-[18px]">
        <div className="flex items-start pt-[9px] pl-px">
          <label htmlFor="desc" className="w-[112px] leading-3">说明(P):</label>
          <input id="desc" className={`h-[22px] w-[461px] ${DLG_INPUT}`} />
        </div>
        <div className="mt-[14px] flex gap-[10px]">
          <div className="w-[318px]">
            <fieldset className="h-[166px] border border-[#dcdcdc] pl-[11px]">
              <legend className="-ml-[8px] px-1 leading-[14px]">封口</legend>
              <div className="grid grid-cols-[102px_102px_1fr] items-center pt-[9px]">
                <span className="col-start-2 h-[22px] leading-[22px]">起点</span>
                <span className="leading-[22px]">端点</span>
                {CAPS.map((c) => (
                  <div key={c} className="col-span-3 grid h-7 grid-cols-subgrid items-center">
                    <span>{c}</span>
                    <Check label={c + '起点'} />
                    <Check label={c + '端点'} />
                  </div>
                ))}
                <label htmlFor="angle1" className="pt-[3px]">角度(N):</label>
                <input id="angle1" defaultValue="90.00" className={`h-[22px] w-[82px] ${DLG_INPUT}`} />
                <input aria-label="端点角度" defaultValue="90.00" className={`h-[22px] w-[82px] ${DLG_INPUT}`} />
              </div>
            </fieldset>
            <fieldset className="mt-[10px] h-[55px] border border-[#dcdcdc] pl-[11px]">
              <legend className="-ml-[8px] px-1 leading-[14px]">填充</legend>
              <div className="flex items-center pt-[5px]">
                <label htmlFor="fill" className="w-[101px]">填充颜色(F):</label>
                <ColorSelect id="fill" swatch="bg-white" value="无" width="w-[194px]" />
              </div>
            </fieldset>
            <div className="mt-[17px] flex h-[39px] items-center border border-[#dcdcdc] pt-1 pl-[11px]">
              <span className="w-[102px]">显示连接(J):</span>
              <Check label="显示连接" />
            </div>
          </div>
          <fieldset className="h-[287px] w-[318px] border border-[#dcdcdc] pl-[10px]">
            <legend className="-ml-[8px] px-1 leading-[14px]">图元(E)</legend>
            <div className="relative">
              <table className="w-[282px] table-fixed text-left leading-4">
                <thead>
                  <tr>
                    <th className="h-[34px] w-[78px] pt-[6px] pl-[5px] font-normal">偏移</th>
                    <th className="w-[81px] pt-[6px] font-normal">颜色</th>
                    <th className="pt-[6px] font-normal">线型</th>
                  </tr>
                </thead>
                <tbody className="border-l border-[#828790]">
                  <tr className="bg-white"><td className="pl-[5px]">250</td><td>BYLAYER</td><td>ByLayer</td></tr>
                  <tr className="bg-[#f0f0f0]"><td className="pl-[5px]">-120</td><td>BYLAYER</td><td>ByLayer</td></tr>
                </tbody>
              </table>
              <div className="h-9 w-[282px] border-l border-[#828790] bg-white" />
              <div className="pointer-events-none absolute top-[30px] -left-3 h-[76px] w-[300px] border-[7px] border-[#fb3636]" />
            </div>
            <div className="mt-[15px] flex gap-[13px]">
              <button className={`w-[90px] ${DLG_BTN}`}>添加(A)</button>
              <button className={`w-[80px] ${DLG_BTN}`}>删除(D)</button>
            </div>
            <div className="mt-[19px] flex items-center">
              <label htmlFor="offset" className="w-[102px] pt-1">偏移(S):</label>
              <input id="offset" defaultValue="-120" className={`h-[22px] w-[82px] ${DLG_INPUT}`} />
            </div>
            <div className="mt-[15px] flex items-center">
              <label htmlFor="color" className="w-[102px] pt-[2px]">颜色(C):</label>
              <ColorSelect id="color" swatch="bg-[#ff0000]" value="ByLayer" width="w-[184px]" />
            </div>
            <div className="mt-[14px] flex items-center">
              <span className="w-[103px]">线型:</span>
              <button className={`w-[182px] ${DLG_BTN}`}>线型(Y)...</button>
            </div>
          </fieldset>
        </div>
        <div className="mt-[30px] flex justify-end gap-[22px] pr-1">
          <button className="h-[26px] w-[90px] border-2 border-[#0078d7] bg-[#e1e1e1] pb-[2px] leading-none">确定</button>
          <button className={`w-[90px] ${DLG_BTN}`}>取消</button>
          <button className={`w-[90px] ${DLG_BTN}`}>帮助(H)</button>
        </div>
      </div>
    </div>
  )
}

function StyleDialog() {
  return (
    <div role="dialog" aria-label="多线样式" className="absolute top-[81px] left-[565px] flex h-[481px] w-[442px] flex-col justify-between bg-[#f0f0f0] shadow-[0_0_0_1px_#444]">
      <DialogTitle>多线样式</DialogTitle>
      <Ico w={10} className="self-end text-[#bbb]" f="M6 0h2v2h-2z M3 3h2v2h-2z M6 3h2v2h-2z M0 6h2v2h-2z M3 6h2v2h-2z M6 6h2v2h-2z" />
    </div>
  )
}

/* ---------- bottom bars ---------- */

function LayoutTabs() {
  return (
    <div className="flex h-[20px] items-stretch text-xs text-[#b4b4b4]">
      <button className="ml-3 w-[46px] rounded-b-lg bg-linear-to-b from-[#5e5e5e] to-[#8a8a8a] font-bold text-white">模型</button>
      <button className="ml-[3px] w-[50px] rounded-b-lg bg-[#525252]">布局1</button>
      <button className="ml-[4px] w-[50px] rounded-b-lg bg-[#525252]">布局2</button>
      <button aria-label="新建布局" className="ml-[7px] flex h-[17px] w-[21px] items-center justify-center rounded-b bg-[#525252] text-[#ddd]"><Ico w={9} sw={2} d="M4.5 0V9M0 4.5H9" /></button>
    </div>
  )
}

type Cell = { w: string; on?: boolean; sep?: boolean; caret?: boolean; text?: string; label?: string; d?: string; f?: string; sw?: number }

const CELLS: Cell[] = [
  { w: 'w-[24px]', on: true, label: '栅格', d: 'M5 1V15M10 1V15M14 1V15M1 4H17M1 8H17M1 12H17', sw: 2 },
  { w: 'w-[24px]', label: '捕捉', f: 'M2 2h2v2h-2zM7 2h2v2h-2zM12 2h2v2h-2zM2 7h2v2h-2zM7 7h2v2h-2zM12 7h2v2h-2zM2 12h2v2h-2zM7 12h2v2h-2zM12 12h2v2h-2z' },
  { w: 'w-[17px]', caret: true, sep: true },
  { w: 'w-[26px]', label: '推断约束', sep: true, d: 'M9 1H15V7H9ZM8 1V10H3', f: 'M1 9H8V16H1Z' },
  { w: 'w-[25px]', on: true, label: '动态输入', sep: true, d: 'M4 1V9M0 5H8', f: 'M6 10H16V15H6Z', sw: 1 },
  { w: 'w-[25px]', label: '正交', d: 'M2 1V15H16M2 10H7V15' },
  { w: 'w-[24px]', on: true, label: '极轴', d: 'M10 3A6 6 0 1 0 14 10H8L15 1M8 10V5' },
  { w: 'w-[16px]', caret: true },
  { w: 'w-[24px]', label: '等轴测草图' },
  { w: 'w-[17px]', caret: true, sep: true },
  { w: 'w-[24px]', on: true, label: '对象捕捉追踪', d: 'M14 2L2 14H16' },
  { w: 'w-[24px]', on: true, label: '对象捕捉', d: 'M5 4H15V15H3V6M1 1H5V5H1Z' },
  { w: 'w-[16px]', caret: true, sep: true },
  { w: 'w-[25px]', label: '线宽', f: 'M1 2H16V3H1Z M1 6H7V8H1Z M9 6H16V8H9Z M1 10H16V13H1Z M1 14H16V16H1Z' },
  { w: 'w-[24px]', on: true, label: '透明度', sep: true, d: 'M1 1H16V15H1Z', f: 'M3 3h3v3h-3zM9 3h3v3h-3zM6 6h3v3h-3zM12 6h3v3h-3zM3 9h3v3h-3zM9 9h3v3h-3zM6 12h3v3h-3z' },
  { w: 'w-[25px]', label: '选择循环', sep: true },
  { w: 'w-[26px]', label: '三维对象捕捉' },
  { w: 'w-[16px]', caret: true, sep: true },
  { w: 'w-[25px]', label: '动态 UCS', d: 'M5 3V12H15M8 12L15 3', f: 'M5 0L8 4H2Z M16 12L12 9V15Z' },
  { w: 'w-[24px]', label: '选择过滤' },
  { w: 'w-[15px]', caret: true },
  { w: 'w-[24px]', on: true, label: '小控件', d: 'M8 0V7M8 8L2 13M8 8L14 13M8 3L13 6V12L8 15L3 12V6Z' },
  { w: 'w-[16px]', caret: true, sep: true },
  { w: 'w-[25px]', on: true, label: '注释可见性', f: 'M7 1L9 8L14 15L9 12L7 16L5 12L0 15L5 8Z', d: 'M11 3A2 2 0 1 0 15 3A2 2 0 1 0 11 3' },
  { w: 'w-[24px]', label: '自动缩放', f: 'M7 1L9 8L14 15L9 12L7 16L5 12L0 15L5 8Z M13 0L10 5H13L11 9L16 4H13Z' },
  { w: 'w-[24px]', label: '注释比例', f: 'M8 1L10 8L15 15L10 12L8 16L6 12L1 15L6 8Z' },
  { w: 'w-[58px]', text: '1:1 / 100%' },
  { w: 'w-[16px]', caret: true, sep: true },
  { w: 'w-[26px]', label: '切换工作空间' },
  { w: 'w-[65px]', text: '草图与注释' },
  { w: 'w-[16px]', caret: true, sep: true },
  { w: 'w-[25px]', label: '注释监视器', sep: true, d: 'M8 0V16M0 8H16', sw: 2 },
  { w: 'w-[26px]', label: '单位', f: 'M5 0H12V2H8V4H12V6H8V7H12V9H8V10H12V12H8V13H12V16H5Z' },
  { w: 'w-[34px]', text: '小数' },
  { w: 'w-[39px]', caret: true, sep: true },
  { w: 'w-[26px]', label: '快捷特性', sep: true, d: 'M2 1H14V15H2ZM4 5H6M8 5H12M4 8H6M8 8H12M4 11H6M8 11H12' },
  { w: 'w-[25px]', on: true, label: '锁定用户界面', f: 'M9 9H16V15H9Z', d: 'M1 2H14V6M1 2V12H7M10 9V7H14V9', sw: 2 },
  { w: 'w-[16px]', caret: true, sep: true },
  { w: 'w-[26px]', label: '隔离对象', sep: true, d: 'M8 8L13 15H3ZM2 2H6V5H2Z' },
  { w: 'w-[27px]', on: true, label: '图形性能', sep: true, d: 'M8 1A7 7 0 1 0 9 1M9 5L7 12', sw: 2 },
  { w: 'w-[25px]', label: '受信任', sep: true },
  { w: 'w-[27px]', label: '全屏显示', sep: true, d: 'M1 2H16V14H1ZM3 11L7 7M10 6H14V9' },
  { w: 'w-[25px]', label: '自定义', d: 'M0 3H16M0 8H16M0 13H16', sw: 2 },
]

function StatusIcon({ c }: { c: Cell }) {
  if (c.label === '等轴测草图') return <Ico w={18}><path d="M2 2L15 16" stroke="#e05252" /><path d="M9 0V18" stroke="#58b87a" /><path d="M7.5 7.5H10.5V10.5H7.5Z" /></Ico>
  if (c.label === '选择循环') return <Ico w={18}><path d="M6 6H16V16H6Z" fill="#7fd69a" stroke="none" /><path d="M3 0V6M0 3H6" /></Ico>
  if (c.label === '三维对象捕捉')
    return <Ico w={18} d="M3.5 10V6L8 2H15.5V9L11.5 14.5H7M3 6.500H11.5V14M11.5 6.5L15 2"><path d="M1.500 11.5H5.5V15.5H1.5Z" stroke="#f0a072" /></Ico>
  if (c.label === '选择过滤')
    return <Ico w={18} d="M3 5.5H11.5V15.500H3.5V5L7 1.5H15.5V11L12 15M12 5L15 2"><path d="M2 4h3v3h-3zM10 4h3v3h-3zM2 14h3v3h-3zM10 14h3v3h-3zM14 0h3v3h-3zM14 10h3v3h-3z" fill="#63b5ee" stroke="none" /></Ico>
  if (c.label === '切换工作空间')
    return <Ico w={18}><circle cx="9" cy="9" r="4.5" strokeWidth="3" /><path d="M9 1V4M9 14V17M1 9H4M14 9H17M3.5 3.5L5.5 5.5M14.5 3.5L12.5 5.5M3.5 14.5L5.5 12.5M14.5 14.5L12.5 12.5" strokeWidth="3" /></Ico>
  if (c.label === '受信任')
    return <Ico w={18}><path d="M5 1H15V10H5Z" fill="#5aaef0" stroke="none" /><path d="M1 9H8V15H1Z" fill="#f2d64b" stroke="none" /><path d="M7 12L10 15L16 8" stroke="#35b44a" strokeWidth="2" /></Ico>
  return <Ico w={17} d={c.d} f={c.f} sw={c.sw} />
}

function StatusBar() {
  return (
    <div className="flex h-7 shrink-0 items-stretch border-2 border-r-0 border-[#7a7a7a] bg-[#4b4b4b] text-[#e4e4e4]">
      <div className="flex w-[211px] items-center justify-end border-r-2 border-[#7a7a7a] pr-[3px] text-xs whitespace-nowrap text-white">64922.8581, 14134.4059, 0.0000</div>
      <button className="w-[29px] border-r-2 border-[#7a7a7a] text-xs font-bold whitespace-nowrap text-white">模型</button>
      {CELLS.map((c, i) => (
        <button key={i} aria-label={c.label} className={`flex items-center justify-center text-xs whitespace-nowrap text-white ${c.w} ${c.on ? 'bg-[#5c8bc0]' : ''} ${c.sep ? 'border-r border-[#7a7a7a]' : ''}`}>
          {c.caret ? <Caret className="text-white" /> : c.text ? c.text : <StatusIcon c={c} />}
        </button>
      ))}
    </div>
  )
}

// sliver of the desktop that shows past the window's right edge
function DesktopEdge() {
  return (
    <div className="flex w-2 shrink-0 flex-col bg-black">
      <div className="h-2 bg-[#e9d27c]" />
      <div className="h-[30px] bg-[#34363c]" />
      <div className="h-[66px]" />
      <div className="h-[573px] rounded-l border-l-2 border-[#eef4fb] bg-[#c9d8ec]" />
      <div className="h-[67px]" />
      <div className="h-5 bg-[#222]" />
      <div className="h-16 bg-[#3a3b44]" />
      <div className="h-8 bg-white" />
    </div>
  )
}

export default function App() {
  return (
    <div className={`flex h-screen w-full overflow-hidden bg-black ${UI}`}>
      <div className="relative flex min-w-0 flex-1 flex-col bg-[#373737]">
        <TitleBar />
        <MenuBar />
        <RibbonTabs />
        <Ribbon />
        <FileTabs />
        <button aria-label="应用程序菜单" className="absolute top-0 left-0 flex h-[41px] w-[41px] items-center gap-[2px] border border-[#222] bg-linear-to-b from-[#8c8c8c] to-[#c4c4c4] pl-[3px]">
          <ALogo size={27} />
          <Caret className="text-[#333]" />
        </button>
        <main className="flex min-h-0 flex-1">
          <Palette />
          <div className="relative flex-1 overflow-hidden bg-[#212830]">
            <Drawing />
            <p className="absolute top-[5px] left-[4px] text-xs text-white">[−][俯视][二维线框]</p>
            <ViewCube />
            <NavBar />
            <StyleDialog />
            <NewStyleDialog />
            <CommandLine />
            <div className="absolute top-[66px] -right-[27px] flex h-[46px] w-[46px] items-center rounded-full border-2 border-white bg-linear-to-b from-[#8fe08c] to-[#2fc24e] pl-[3px] text-[11px] font-bold text-white">55</div>
          </div>
        </main>
        <footer className="flex h-7 items-start justify-between">
          <LayoutTabs />
          <StatusBar />
        </footer>
        <p className="pointer-events-none absolute right-0 bottom-[8px] font-['Liberation_Sans',sans-serif] text-[16px] leading-5 text-white/70">https://blog.csdn.net/qq_41068712</p>
      </div>
      <DesktopEdge />
    </div>
  )
}
